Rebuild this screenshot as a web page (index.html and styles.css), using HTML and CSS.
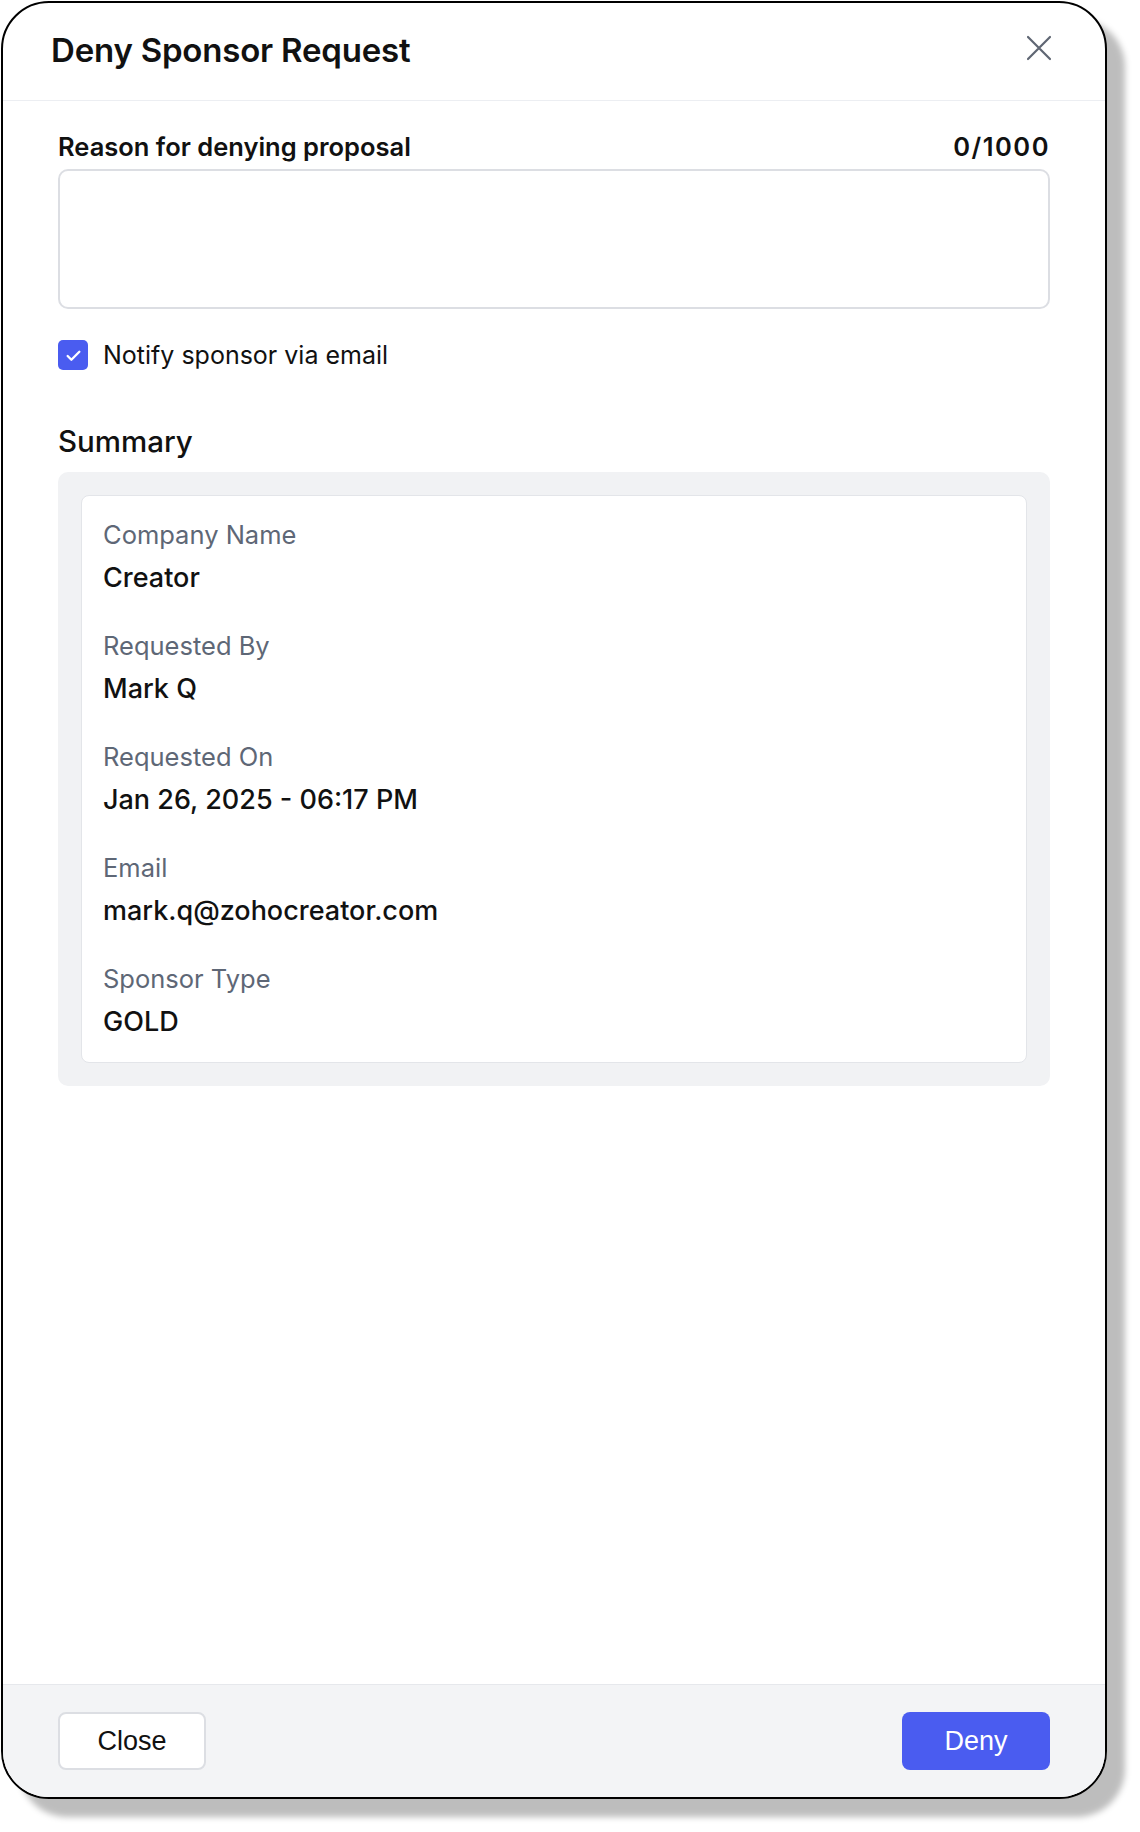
FILE: index.html
```html
<!DOCTYPE html>
<html lang="en">
<head>
<meta charset="utf-8">
<title>Deny Sponsor Request</title>
<link rel="stylesheet" href="styles.css">
</head>
<body>
<div class="page">
  <div class="dialog">
    <header class="dialog-header">
      <h1 class="dialog-title">Deny Sponsor Request</h1>
      <button class="icon-close" aria-label="Close">
        <svg width="28" height="28" viewBox="0 0 28 28" fill="none" stroke="#5f6673" stroke-width="2.2" stroke-linecap="round"><path d="M3 3L25 25M25 3L3 25"/></svg>
      </button>
    </header>
    <main class="dialog-body">
      <div class="field-head">
        <label class="field-label">Reason for denying proposal</label>
        <span class="counter">0/1000</span>
      </div>
      <div class="textarea"></div>
      <div class="check-row">
        <span class="checkbox">
          <svg width="17" height="17" viewBox="0 0 16 16" fill="none" stroke="#fff" stroke-width="2.2" stroke-linecap="round" stroke-linejoin="round"><path d="M2.5 8.5L6 12L13.5 4.5"/></svg>
        </span>
        <span class="check-text">Notify sponsor via email</span>
      </div>
      <h2 class="summary-title">Summary</h2>
      <div class="summary-box">
        <div class="summary-card">
          <div class="item"><div class="item-label">Company Name</div><div class="item-value">Creator</div></div>
          <div class="item"><div class="item-label">Requested By</div><div class="item-value">Mark Q</div></div>
          <div class="item"><div class="item-label">Requested On</div><div class="item-value">Jan 26, 2025 - 06:17 PM</div></div>
          <div class="item"><div class="item-label">Email</div><div class="item-value">mark.q@zohocreator.com</div></div>
          <div class="item"><div class="item-label">Sponsor Type</div><div class="item-value">GOLD</div></div>
        </div>
      </div>
    </main>
    <footer class="dialog-footer">
      <button class="btn btn-secondary">Close</button>
      <button class="btn btn-primary">Deny</button>
    </footer>
  </div>
</div>
</body>
</html>
```
FILE: styles.css
```css
* { box-sizing: border-box; }
html, body { margin: 0; padding: 0; background: #fff; }
body { font-family: Inter, "Noto Sans", sans-serif; color: #111; }

.page { padding: 1px 0 0 1px; width: 1140px; height: 1832px; }

.dialog {
  width: 1106px;
  height: 1798px;
  border: 2px solid #000;
  border-radius: 48px;
  background: #fff;
  overflow: hidden;
  display: flex;
  flex-direction: column;
  box-shadow: 18px 18px 6px rgba(0, 0, 0, 0.26);
}

.dialog-header {
  height: 98px;
  flex: none;
  display: flex;
  align-items: center;
  justify-content: space-between;
  padding: 0 52px 4px 48px;
  border-bottom: 1px solid #eceef2;
}
.dialog-title {
  margin: 0;
  font-size: 33px;
  line-height: 40px;
  font-weight: 600;
  letter-spacing: -0.2px;
  color: #111;
}
.icon-close {
  border: 0;
  background: none;
  padding: 0;
  width: 28px;
  height: 28px;
  display: flex;
  margin-top: -4px;
}

.dialog-body {
  flex: 1;
  padding: 31px 55px 0 55px;
  display: flex;
  flex-direction: column;
}

.field-head {
  display: flex;
  justify-content: space-between;
  align-items: center;
  height: 28px;
}
.field-label {
  font-size: 25.5px;
  font-weight: 600;
  color: #111;
}
.counter {
  font-size: 25.5px;
  font-weight: 600;
  letter-spacing: 1.5px;
  color: #111;
}

.textarea {
  margin-top: 9px;
  height: 140px;
  border: 2px solid #dcdee3;
  border-radius: 10px;
  background: #fff;
}

.check-row {
  margin-top: 31px;
  display: flex;
  align-items: center;
  gap: 15px;
}
.checkbox {
  width: 30px;
  height: 30px;
  border-radius: 5px;
  background: #4a5cf0;
  display: flex;
  align-items: center;
  justify-content: center;
}
.check-text { font-size: 25px; line-height: 30px; color: #111; }

.summary-title {
  margin: 55px 0 0 0;
  font-size: 29.5px;
  line-height: 32px;
  font-weight: 500;
  color: #111;
}

.summary-box {
  margin-top: 15px;
  background: #f1f2f4;
  border-radius: 10px;
  padding: 23px;
}
.summary-card {
  background: #fff;
  border: 1px solid #e3e5e9;
  border-radius: 8px;
  padding: 25px 21px 25px 21px;
  display: flex;
  flex-direction: column;
  gap: 39px;
}
.item-label {
  font-size: 25.5px;
  line-height: 28px;
  color: #5e6776;
}
.item-value {
  margin-top: 14px;
  font-size: 27px;
  line-height: 30px;
  font-weight: 500;
  color: #111;
}

.dialog-footer {
  flex: none;
  height: 113px;
  background: #f3f4f6;
  border-top: 1px solid #e6e8ec;
  display: flex;
  align-items: center;
  justify-content: space-between;
  padding: 0 55px;
}
.btn {
  width: 148px;
  height: 58px;
  border-radius: 8px;
  font-family: "Liberation Sans", Arial, sans-serif;
  font-size: 27px;
}
.btn-secondary {
  background: #fff;
  border: 2px solid #dcdee3;
  color: #111;
}
.btn-primary {
  background: #4a5cf0;
  border: 0;
  color: #fff;
}
```
